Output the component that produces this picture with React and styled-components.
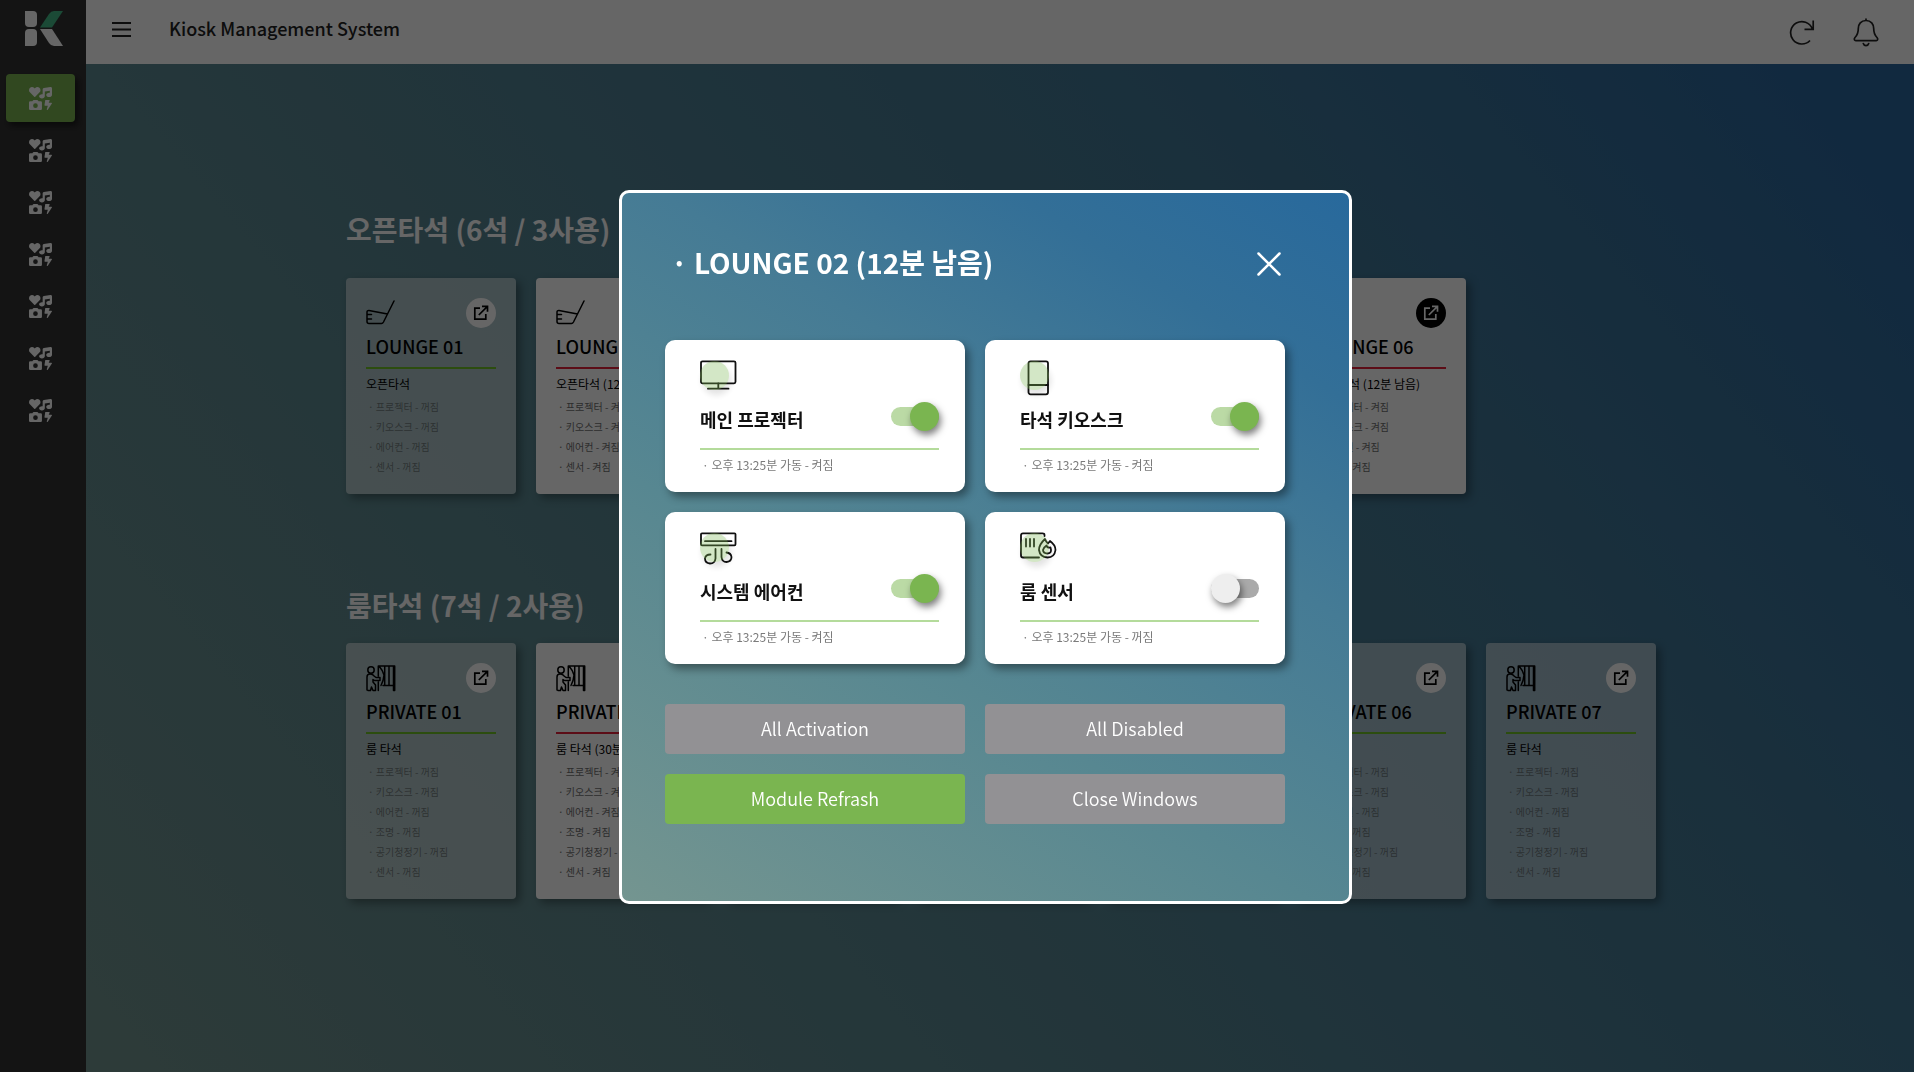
import React, { useState } from "react";
import styled, { createGlobalStyle, css } from "styled-components";
import { FaIcons } from "react-icons/fa";

const GREEN = "#7ab550";
const FONT = '"Noto Sans CJK KR", "Noto Sans", sans-serif';

const Global = createGlobalStyle`
  * { box-sizing: border-box; margin: 0; padding: 0; }
  body { font-family: ${FONT}; color: #000; background: #333; }
  button { font: inherit; border: 0; background: none; cursor: pointer; }
  ul { list-style: none; }
`;

const Shell = styled.div`
  display: flex;
  min-height: 100vh;
`;

const Sidebar = styled.nav`
  flex: 0 0 86px;
  display: flex;
  flex-direction: column;
  align-items: flex-start;
  padding: 11px 6px 0;
  background: #333;
`;

const LogoLink = styled.a`
  display: block;
  height: 35px;
  margin: 0 0 28px 19px;
`;

const NavList = styled.ul`
  display: grid;
  gap: 4px;
`;

const NavButton = styled.button`
  display: grid;
  place-items: center;
  width: 69px;
  height: 48px;
  border-radius: 4px;
  color: #fff;
  ${(p) =>
    p.$active &&
    css`
      background: ${GREEN};
      box-shadow: 3px 4px 6px rgba(0, 0, 0, 0.5);
    `}
`;

const Page = styled.div`
  flex: 1;
  display: flex;
  flex-direction: column;
  min-width: 0;
`;

const TopBar = styled.header`
  display: flex;
  align-items: center;
  gap: 38px;
  height: 64px;
  padding: 0 35px 0 26px;
  background: #fff;
`;

const IconButton = styled.button`
  display: grid;
  place-items: center;
`;

const MenuButton = styled(IconButton)`
  padding-bottom: 6px;
`;

const AppTitle = styled.h1`
  flex: 1;
  font-size: 18px;
  line-height: 24px;
  font-weight: 500;
  padding-bottom: 8px;
  color: #222;
`;

const Main = styled.main`
  flex: 1;
  display: flex;
  flex-direction: column;
  align-items: center;
  gap: 91px;
  padding: 145px 20px 0 22px;
  background: linear-gradient(50deg, #729490 0%, #5c8991 32%, #427896 70%, #2b679e 96%);
`;

const Section = styled.section`
  width: 100%;
  max-width: 1310px;
`;

const SectionTitle = styled.h2`
  font-size: 28px;
  line-height: 40px;
  font-weight: 700;
  color: #fff;
  margin-bottom: ${(p) => p.$gap}px;
`;

const SeatRow = styled.div`
  display: flex;
  gap: 20px;
`;

const SeatCard = styled.article`
  width: 170px;
  padding: 20px 20px 17px;
  border-radius: 4px;
  background: ${(p) => (p.$active ? "#fff" : "rgba(255, 255, 255, 0.5)")};
  box-shadow: 4px 4px 10px rgba(0, 0, 0, 0.35);
`;

const SeatTop = styled.div`
  display: flex;
  justify-content: space-between;
  align-items: center;
  height: 30px;
`;

const OpenLink = styled.a`
  display: grid;
  place-items: center;
  width: 30px;
  height: 30px;
  border-radius: 50%;
  background: ${(p) => (p.$active ? "#000" : "#fff")};
  color: ${(p) => (p.$active ? "#fff" : "#000")};
`;

const SeatName = styled.h3`
  height: 41px;
  padding-top: 4px;
  border-bottom: 2px solid ${(p) => (p.$active ? "#e6213a" : "#6ec027")};
  font-size: 18px;
  line-height: 28px;
  font-weight: 500;
  white-space: nowrap;
`;

const SeatInfo = styled.p`
  font-size: 12px;
  line-height: 20px;
  margin: 5px 0 3px;
  white-space: nowrap;
`;

const DeviceList = styled.ul`
  padding-left: 2px;
  font-size: 10px;
  line-height: 20px;
  color: ${(p) => (p.$active ? "#6e6e6e" : "rgba(60, 60, 60, 0.55)")};
`;

const Backdrop = styled.div`
  position: fixed;
  inset: 0;
  display: flex;
  align-items: center;
  justify-content: center;
  padding: 22px 0 0 57px;
  background: rgba(0, 0, 0, 0.6);
`;

const Dialog = styled.section`
  width: 733px;
  padding: 43px 64px 77px 43px;
  border: 3px solid #fff;
  border-radius: 10px;
  background: linear-gradient(32deg, #749590 0%, #578791 37%, #457b95 63%, #336f97 82%, #28699c 100%);
`;

const DialogHead = styled.header`
  display: flex;
  justify-content: space-between;
  align-items: center;
  height: 52px;
  margin-bottom: 52px;
  padding: 4px 4px 0 6px;
`;

const DialogTitle = styled.h2`
  padding-bottom: 4px;
  font-size: 28px;
  line-height: 40px;
  font-weight: 700;
  color: #fff;
`;

const Grid = styled.div`
  display: grid;
  grid-template-columns: 1fr 1fr;
  gap: 20px;
`;

const ModuleCard = styled.article`
  height: 152px;
  padding: 20px 26px 0 35px;
  border-radius: 10px;
  background: #fff;
  box-shadow: 4px 5px 9px rgba(0, 0, 0, 0.4);
`;

const ModuleIcon = styled.div`
  position: relative;
  height: 36px;
  svg { display: block; }
  &::after {
    content: "";
    position: absolute;
    left: 0;
    top: 1px;
    width: 29px;
    height: 29px;
    border-radius: 50%;
    background: ${GREEN};
    box-shadow: 2px 5px 6px rgba(0, 0, 0, 0.35);
    opacity: 0.32;
  }
`;

const ModuleRow = styled.div`
  display: flex;
  justify-content: space-between;
  height: 54px;
  padding-top: 5px;
  border-bottom: 2px solid #b4db9b;
`;

const ModuleName = styled.label`
  font-size: 18px;
  line-height: 36px;
  font-weight: 700;
  color: #111;
`;

const ModuleNote = styled.p`
  padding: 5px 0 0 2px;
  font-size: 12px;
  line-height: 20px;
  color: #7a7a7a;
`;

const Switch = styled.input.attrs({ type: "checkbox", role: "switch" })`
  appearance: none;
  display: flex;
  align-items: center;
  width: 48px;
  height: 19px;
  margin-top: 6px;
  border-radius: 10px;
  background: #aaa;
  cursor: pointer;
  &::before {
    content: "";
    width: 29px;
    height: 29px;
    flex: none;
    border-radius: 50%;
    background: #eee;
    box-shadow: 2px 4px 7px rgba(0, 0, 0, 0.5);
  }
  &:checked { background: #bbdaa5; justify-content: flex-end; }
  &:checked::before { background: ${GREEN}; }
`;

const Actions = styled(Grid)`
  margin-top: 40px;
`;

const ActionButton = styled.button`
  && {
    height: 50px;
    padding-bottom: 2px;
    border-radius: 4px;
    font-size: 18px;
    font-weight: 350;
    line-height: 24px;
    color: #fff;
    background: ${(p) => (p.$primary ? GREEN : "#929194")};
  }
`;

const Logo = () => (
  <svg width="38" height="35" viewBox="0 0 38 35" aria-hidden="true">
    <path d="M0 0H8Q12 0 12 4V12Q12 16 8 16H4Q0 16 0 12Z" fill="#fff" />
    <path d="M4 18H8Q12 18 12 22V31Q12 35 8 35H0V22Q0 18 4 18Z" fill="#fff" />
    <path d="M15 16.500L24 3Q26 0 29 0H38L27 16.500Z" fill="#45b987" />
    <path d="M15 18H27L38 35H29Q26 35 24 32Z" fill="#fff" />
  </svg>
);

const MenuIcon = () => (
  <svg width="19" height="15" viewBox="0 0 19 15" fill="none" stroke="#222" strokeWidth="2">
    <path d="M0 1H19M0 7.500H19M0 14H19" />
  </svg>
);

const RefreshIcon = () => (
  <svg width="26" height="26" viewBox="0 0 26 26" fill="none" stroke="#222" strokeWidth="1.700">
    <path d="M21 21.500A11.200 11.200 0 1 1 23.300 9.800M24.200 1.500V10.300H15.500" />
  </svg>
);

const BellIcon = () => (
  <svg width="26" height="29" viewBox="0 0 26 29" fill="none" stroke="#222" strokeWidth="1.700" strokeLinecap="round" strokeLinejoin="round">
    <path d="M13 1V2.500M13 2.500C8 2.500 5.300 6 5.300 10.500C5.300 15.500 4.500 17 2 19.500C.6 21.300 1.500 22.600 2.800 22.600H23.200C24.500 22.600 25.400 21.300 24 19.500C21.500 17 20.700 15.500 20.700 10.500C20.700 6 18 2.500 13 2.500Z" />
    <path d="M10.300 25.500A2.800 2.800 0 0 0 15.700 25.500" />
  </svg>
);

const GolfIcon = () => (
  <svg width="30" height="26" viewBox="0 0 30 26" fill="none" stroke="currentColor" strokeWidth="1.500" strokeLinecap="round" strokeLinejoin="round">
    <path d="M28 1L17.500 22Q16.700 23.500 15.500 23.500H3Q1 23.500 1 21.500V12Q1 10.300 3 10.500L21.500 14M1 14.500H5.500M1 19H5.500" />
  </svg>
);

const RoomIcon = () => (
  <svg width="30" height="27" viewBox="0 0 30 27" fill="none" stroke="currentColor" strokeWidth="1.500" strokeLinecap="round" strokeLinejoin="round">
    <circle cx="5" cy="5" r="3.200" />
    <path d="M1 25V12Q1 9 4 9Q7 9 8 11L10 12.500H14V15.500H8.500L7 14.500V17L9.500 20V25.500H7L5.500 22L4.500 25.500H2M12.300 11V1H28.700V25.500H27.500V20.500H17M12.300 17V25.500M13 1Q16.500 5 18 10Q17.500 16 15 20.500M18.700 1V20.500M23 1V20.500M27.500 1V20.500" />
  </svg>
);

const OpenIcon = () => (
  <svg width="16" height="16" viewBox="0 0 16 16" fill="none" stroke="currentColor" strokeWidth="1.700">
    <path d="M7 3.200H1.800V14.200H12.800V9M9 1.300H14.500V6.800M14.200 1.600L5.800 10" />
  </svg>
);

const CloseIcon = () => (
  <svg width="24" height="24" viewBox="0 0 24 24" fill="none" stroke="#fff" strokeWidth="2.500" strokeLinecap="round">
    <path d="M1.500 1.500L22.500 22.500M22.500 1.500L1.500 22.500" />
  </svg>
);

const strokes = { fill: "none", stroke: "#111", strokeWidth: 1.8, strokeLinecap: "round", strokeLinejoin: "round" };

const ProjectorIcon = () => (
  <svg width="37" height="36" viewBox="0 0 37 36" {...strokes}>
    <rect x="1" y="1.300" width="34.500" height="22" rx="1.500" />
    <path d="M18.300 23.500V28.500M8 28.700H28.500" />
  </svg>
);

const KioskIcon = () => (
  <svg width="37" height="36" viewBox="0 0 37 36" {...strokes}>
    <rect x="8.500" y="1.300" width="19.500" height="33" rx="2" />
    <path d="M8.500 25H28" />
  </svg>
);

const AirconIcon = () => (
  <svg width="37" height="36" viewBox="0 0 37 36" {...strokes}>
    <rect x="1" y="1.300" width="34.500" height="12" rx="1" />
    <path d="M5 9.200H31.500M15.500 17V26.500Q15 31.500 10 31.500Q5 31 5 26.500Q5.500 22.500 10.500 22.500M21.500 17V25Q22 30 26.500 30Q31.500 29.500 31.500 25Q31 21 26.500 20.500" />
  </svg>
);

const SensorIcon = () => (
  <svg width="37" height="36" viewBox="0 0 37 36" {...strokes}>
    <path d="M24.500 4V3Q24.500 1.300 22.500 1.300H3Q1 1.300 1 3.300V23.500Q1 25.500 3 25.500H19M6 7V14.500M10 7V14.500M14 7V14.500" />
    <path d="M25 7Q26 10 28 11.500L30 9Q35.500 13 35.500 18Q34.500 25.500 27.500 25.500Q20 25 19 18Q19 12.500 25 7Z" />
    <path d="M26.500 13.500Q27 16 30.500 15.500Q32.500 21.300 27.500 21.500Q23 21.300 23 18Q23.500 15.500 26.500 13.500Z" />
  </svg>
);

const loungeDevices = ["프로젝터", "키오스크", "에어컨", "센서"];
const privateDevices = ["프로젝터", "키오스크", "에어컨", "조명", "공기청정기", "센서"];

const makeSeats = (prefix, count, busy) =>
  Array.from({ length: count }, (_, i) => ({
    name: `${prefix} 0${i + 1}`,
    active: busy.includes(i + 1),
  }));

const sections = [
  {
    title: "오픈타석 (6석 / 3사용)",
    gap: 29,
    info: "오픈타석",
    left: "(12분 남음)",
    devices: loungeDevices,
    Icon: GolfIcon,
    seats: makeSeats("LOUNGE", 6, [2, 4, 6]),
  },
  {
    title: "룸타석 (7석 / 2사용)",
    gap: 18,
    info: "룸 타석",
    left: "(30분 남음)",
    devices: privateDevices,
    Icon: RoomIcon,
    seats: makeSeats("PRIVATE", 7, [2, 4]),
  },
];

const modules = [
  { id: "projector", name: "메인 프로젝터", Icon: ProjectorIcon, on: true },
  { id: "kiosk", name: "타석 키오스크", Icon: KioskIcon, on: true },
  { id: "aircon", name: "시스템 에어컨", Icon: AirconIcon, on: true },
  { id: "sensor", name: "룸 센서", Icon: SensorIcon, on: false },
];

function Seat({ seat, section }) {
  const { Icon, info, left, devices } = section;
  return (
    <SeatCard $active={seat.active}>
      <SeatTop>
        <Icon />
        <OpenLink href="#" $active={seat.active} aria-label={`${seat.name} open`}>
          <OpenIcon />
        </OpenLink>
      </SeatTop>
      <SeatName $active={seat.active}>{seat.name}</SeatName>
      <SeatInfo>{seat.active ? `${info} ${left}` : info}</SeatInfo>
      <DeviceList $active={seat.active}>
        {devices.map((d) => (
          <li key={d}>· {d} - {seat.active ? "켜짐" : "꺼짐"}</li>
        ))}
      </DeviceList>
    </SeatCard>
  );
}

function Module({ id, name, Icon, on, onToggle }) {
  return (
    <ModuleCard>
      <ModuleIcon><Icon /></ModuleIcon>
      <ModuleRow>
        <ModuleName htmlFor={id}>{name}</ModuleName>
        <Switch id={id} checked={on} onChange={onToggle} />
      </ModuleRow>
      <ModuleNote>· 오후 13:25분 가동 - {on ? "켜짐" : "꺼짐"}</ModuleNote>
    </ModuleCard>
  );
}

export default function App() {
  const [open, setOpen] = useState(true);
  const [state, setState] = useState(modules.map((m) => m.on));
  const close = () => setOpen(false);
  const setAll = (value) => setState(modules.map(() => value));
  const toggle = (i) => setState((s) => s.map((v, n) => (n === i ? !v : v)));

  return (
    <>
      <Global />
      <Shell>
        <Sidebar aria-label="Main">
          <LogoLink href="#" aria-label="Home"><Logo /></LogoLink>
          <NavList>
            {[0, 1, 2, 3, 4, 5, 6].map((n) => (
              <li key={n}>
                <NavButton $active={n === 0} aria-label={`Menu ${n + 1}`}>
                  <FaIcons size={23} />
                </NavButton>
              </li>
            ))}
          </NavList>
        </Sidebar>
        <Page>
          <TopBar>
            <MenuButton aria-label="Menu"><MenuIcon /></MenuButton>
            <AppTitle>Kiosk Management System</AppTitle>
            <IconButton aria-label="Refresh"><RefreshIcon /></IconButton>
            <IconButton aria-label="Notifications"><BellIcon /></IconButton>
          </TopBar>
          <Main>
            {sections.map((section) => (
              <Section key={section.title}>
                <SectionTitle $gap={section.gap}>{section.title}</SectionTitle>
                <SeatRow>
                  {section.seats.map((seat) => (
                    <Seat key={seat.name} seat={seat} section={section} />
                  ))}
                </SeatRow>
              </Section>
            ))}
          </Main>
        </Page>
      </Shell>
      {open && (
        <Backdrop>
          <Dialog role="dialog" aria-modal="true" aria-labelledby="dialog-title">
            <DialogHead>
              <DialogTitle id="dialog-title">· LOUNGE 02 (12분 남음)</DialogTitle>
              <IconButton aria-label="Close" onClick={close}><CloseIcon /></IconButton>
            </DialogHead>
            <Grid>
              {modules.map((m, i) => (
                <Module key={m.id} {...m} on={state[i]} onToggle={() => toggle(i)} />
              ))}
            </Grid>
            <Actions>
              <ActionButton onClick={() => setAll(true)}>All Activation</ActionButton>
              <ActionButton onClick={() => setAll(false)}>All Disabled</ActionButton>
              <ActionButton $primary>Module Refrash</ActionButton>
              <ActionButton onClick={close}>Close Windows</ActionButton>
            </Actions>
          </Dialog>
        </Backdrop>
      )}
    </>
  );
}
